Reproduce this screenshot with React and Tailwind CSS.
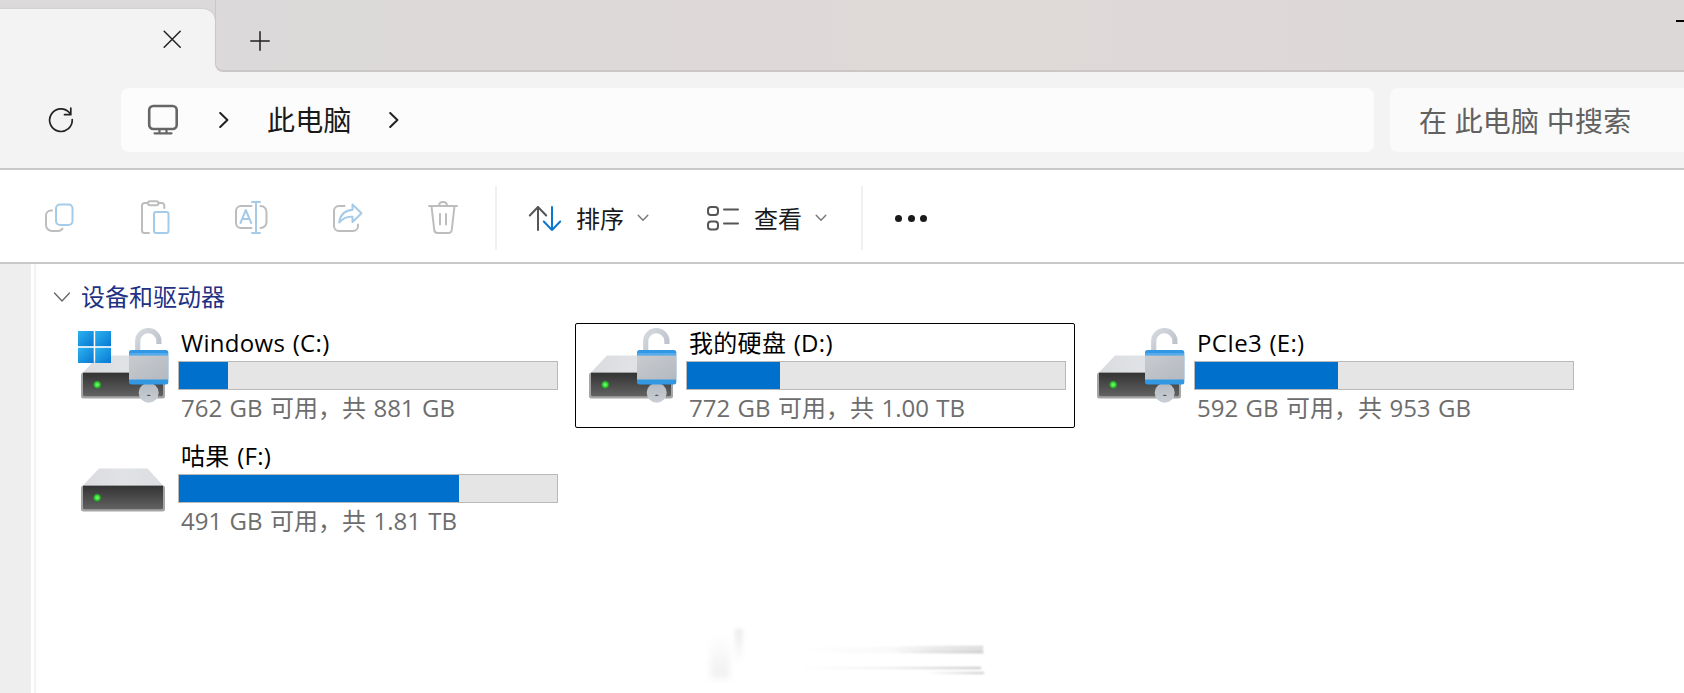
import React from 'react';

const drives = [
  { name: 'Windows (C:)', info: '762 GB 可用，共 881 GB', fill: 49, locked: true, system: true },
  { name: '我的硬盘 (D:)', info: '772 GB 可用，共 1.00 TB', fill: 93, locked: true, selected: true },
  { name: 'PCIe3 (E:)', info: '592 GB 可用，共 953 GB', fill: 143, locked: true },
  { name: '咕果 (F:)', info: '491 GB 可用，共 1.81 TB', fill: 280 },
];

function Icon({ w, h, box, className = '', children }) {
  return (
    <svg width={w} height={h} viewBox={box} fill="none" strokeWidth="2" strokeLinecap="round" strokeLinejoin="round" className={`block shrink-0 ${className}`}>
      {children}
    </svg>
  );
}

function Gradients() {
  return (
    <svg width="0" height="0" className="absolute">
      <defs>
        <linearGradient id="face" x1="0" y1="0" x2="0" y2="1">
          <stop offset="0" stopColor="#333333" />
          <stop offset="1" stopColor="#626262" />
        </linearGradient>
        <linearGradient id="lid" x1="0" y1="0" x2="1" y2="0">
          <stop offset="0" stopColor="#d9dbde" />
          <stop offset="0.5" stopColor="#e1e2e5" />
          <stop offset="1" stopColor="#dcdde1" />
        </linearGradient>
        <linearGradient id="lockBody" x1="0" y1="0" x2="1" y2="1">
          <stop offset="0" stopColor="#c8cbcf" />
          <stop offset="1" stopColor="#b4b9c0" />
        </linearGradient>
        <linearGradient id="shackle" x1="0" y1="0" x2="1" y2="1">
          <stop offset="0" stopColor="#d5d9df" />
          <stop offset="1" stopColor="#b9bec7" />
        </linearGradient>
        <linearGradient id="win" x1="0" y1="0" x2="1" y2="1">
          <stop offset="0" stopColor="#2cb2ee" />
          <stop offset="1" stopColor="#0878d4" />
        </linearGradient>
        <radialGradient id="led">
          <stop offset="0" stopColor="#7dff6d" />
          <stop offset="0.55" stopColor="#35d936" />
          <stop offset="1" stopColor="#1c8a24" stopOpacity="0.5" />
        </radialGradient>
        <linearGradient id="knob" x1="0" y1="0" x2="0" y2="1">
          <stop offset="0" stopColor="#b3b8bf" />
          <stop offset="1" stopColor="#cbd0d6" />
        </linearGradient>
      </defs>
    </svg>
  );
}

function DriveIcon({ locked, system }) {
  return (
    <svg width="103" height="105" viewBox="75 323 103 105" className="block shrink-0">
      <path d="M99 355.500h48.500l16.500 18H82z" fill="url(#lid)" />
      <rect x="81" y="372.500" width="84" height="26" rx="2.500" fill="#a5a5a6" />
      <path d="M83 372.700h80v22q0 1.500-1.500 1.500h-77q-1.500 0-1.500-1.500z" fill="url(#face)" />
      <circle cx="97.200" cy="384.700" r="4.200" fill="url(#led)" />
      {system && (
        <g fill="url(#win)">
          <path d="M78 331h15.700v15.200H78z" />
          <path d="M95.200 331H111v15.200H95.200z" />
          <path d="M78 347.800h15.700v15.200H78z" />
          <path d="M95.200 347.800H111v15.200H95.200z" />
        </g>
      )}
      {locked && (
        <g>
          <path d="M137.700 351v-9a10.600 10.600 0 0 1 21.200 -1.500v3.500" fill="none" stroke="url(#shackle)" strokeWidth="5.200" />
          <circle cx="148.700" cy="392.700" r="10" fill="url(#knob)" />
          <path d="M146.500 396q2.200-3 4.500 0z" fill="#555b63" />
          <rect x="129" y="350" width="39.300" height="34.500" rx="2.500" fill="#3298e4" />
          <rect x="129.500" y="353" width="38.300" height="2.500" fill="#55acec" />
          <rect x="129" y="355.500" width="39.300" height="24" fill="url(#lockBody)" />
        </g>
      )}
    </svg>
  );
}

function Drive({ drive }) {
  return (
    <div className={`flex h-[105px] w-[500px] ${drive.selected ? 'rounded-[2px] outline outline-1 -outline-offset-1 outline-black' : ''}`}>
      <div className="ml-2">
        <DriveIcon locked={drive.locked} system={drive.system} />
      </div>
      <div className="w-[380px]">
        <div className="flex h-[38px] items-center pt-px pl-[3px] tracking-[0.3px] text-black [word-spacing:1px]">{drive.name}</div>
        <div className="h-[29px] border border-[#b9b9b9] bg-[#e5e5e5]">
          <div className="h-[27px] bg-[#0070cd]" style={{ width: drive.fill }} />
        </div>
        <div className="flex h-[36px] items-center pl-[3px] whitespace-nowrap text-[#6d6d6d] [word-spacing:1.2px]">{drive.info}</div>
      </div>
    </div>
  );
}

function TabStrip() {
  return (
    <div className="flex h-[72px] bg-[#dbd9d9]">
      <div className="flex w-[215px] flex-col bg-[#dbd9d9]">
        <div className="mt-[9px] flex-1 rounded-tr-[12px] bg-[#f3f3f3] shadow-[0_0_2px_#bbb]">
          <Icon w={18} h={18} box="0 0 18 18" className="mt-[21px] ml-[163px]">
            <path d="M1.200 1.200l16 16M17.200 1.200l-16 16" stroke="#222" strokeWidth="1.500" />
          </Icon>
        </div>
      </div>
      <div className="flex-1 bg-[#f3f3f3]">
        <div className="flex h-[72px] justify-between rounded-bl-[8px] border-b-2 border-l border-[#cbc7c7] bg-linear-to-r from-[#dbd9d9] via-[#dfd9d8] to-[#dcd8d8]">
          <Icon w={20} h={20} box="0 0 20 20" className="mt-[31px] ml-[34px]">
            <path d="M10 .8v18.400M.8 10h18.400" stroke="#222" strokeWidth="1.500" />
          </Icon>
          <div className="mt-5 h-[2px] w-2 bg-black" />
        </div>
      </div>
    </div>
  );
}

function Crumb({ className }) {
  return (
    <Icon w={10} h={16} box="0 0 10 16" className={className}>
      <path d="M1.200 1l7.200 7-7.200 7" stroke="#222" strokeWidth="2" />
    </Icon>
  );
}

function AddressBar() {
  return (
    <div className="flex h-[98px] border-b-2 border-[#c9c7c7] bg-[#f3f3f3] pt-4 text-[28px]">
      <Icon w={26} h={26} box="0 0 26 26" className="mt-[19px] ml-12">
        <path d="M24.200 12.500A11.300 11.300 0 1 1 21.500 5.800M22.800 1v6.700h-6.300" stroke="#222" strokeWidth="1.700" />
      </Icon>
      <div className="ml-[47px] flex h-16 w-[1253px] items-center rounded-lg bg-[#fcfcfc] text-[#1a1a1a]">
        <Icon w={32} h={31} box="0 0 32 31" className="ml-[26px] -translate-y-px">
          <rect x="2.200" y="2" width="27.500" height="23" rx="4" stroke="#666" strokeWidth="2.600" />
          <path d="M12.500 25v4M19.500 25v4M7.500 29.300h17" stroke="#666" strokeWidth="2.200" />
        </Icon>
        <Crumb className="ml-[40px]" />
        <span className="ml-[38px] tracking-[0.2px]">此电脑</span>
        <Crumb className="ml-[37px]" />
      </div>
      <div className="ml-4 flex h-16 flex-1 items-center rounded-l-lg bg-[#fbfafa] pt-px pl-[29px] tracking-[0.2px] whitespace-nowrap text-[#616161]">在 此电脑 中搜索</div>
    </div>
  );
}

function Chevron({ className }) {
  return (
    <Icon w={12} h={8} box="0 0 12 8" className={className}>
      <path d="M1.200 1.200l4.800 5 4.800-5" stroke="#777" strokeWidth="1.400" />
    </Icon>
  );
}

function Toolbar() {
  return (
    <div className="flex h-[94px] items-center border-b-2 border-[#c9c7c7] bg-white pt-1 text-[#1a1a1a]">
      <Icon w={32} h={32} box="0 0 32 32" className="ml-[43px]">
        <path d="M9 8.500H8a5 5 0 0 0-5 5V23a6 6 0 0 0 6 6h6q3 0 4.500-2.500" stroke="#bdbdbd" />
        <rect x="13" y="2.500" width="16.500" height="20.500" rx="4" stroke="#a5cbe9" />
      </Icon>
      <Icon w={32} h={34} box="0 0 32 34" className="ml-[65px] -translate-y-px">
        <path d="M8 3H4.500A2.500 2.500 0 0 0 2 5.500v25A2.500 2.500 0 0 0 4.500 33H9M18.500 3h3.300a2.500 2.500 0 0 1 2.500 2.500V8" stroke="#bdbdbd" />
        <rect x="8" y="1.300" width="10.500" height="4" rx="2" stroke="#bdbdbd" />
        <rect x="14" y="12" width="14.500" height="21" rx="2" stroke="#a5cbe9" />
      </Icon>
      <Icon w={34} h={34} box="0 0 34 34" className="ml-[62px] -translate-y-px">
        <path d="M17.500 6H7a5 5 0 0 0-5 5v12a5 5 0 0 0 5 5h10.500M26.500 6a6 6 0 0 1 6 6v10a6 6 0 0 1-6 6" stroke="#bdbdbd" />
        <path d="M6.500 23l5.300-13 5.400 13M8.300 19h7M22 2v31M18 2h8M18 33h8" stroke="#a5cbe9" />
      </Icon>
      <Icon w={32} h={32} box="0 0 32 32" className="ml-[64px]">
        <path d="M12.500 4H7a5 5 0 0 0-5 5v15a5 5 0 0 0 5 5h14a5 5 0 0 0 5-5v-1.500" stroke="#bdbdbd" />
        <path d="M20.500 2.500l9 8.700-9 8.800v-5.200q-7.500-.8-13.300 5.700Q8.500 8.800 20.500 7.700z" stroke="#a5cbe9" />
      </Icon>
      <Icon w={32} h={34} box="0 0 32 34" className="ml-[63px] -translate-y-px">
        <path d="M2 6h28M12 6q0-4 4-4t4 4M4.500 6l2.700 23.500A3.500 3.500 0 0 0 10.500 33h10.800a3.500 3.500 0 0 0 3.500-3.500L27.500 6M13 14v10.500M19 14v10.500" stroke="#bdbdbd" />
      </Icon>
      <div className="ml-[36px] h-16 w-[2px] bg-[#f0f0f0]" />
      <Icon w={34} h={26} box="0 0 34 26" className="ml-[31px]">
        <path d="M10 25V2M1.800 10.500L10 2l8.200 8.500" stroke="#555" />
        <path d="M24 2v23M15.800 16.500L24 25l8.200-8.500" stroke="#0c78cd" />
      </Icon>
      <span className="ml-[14px] pt-px">排序</span>
      <Chevron className="ml-[13px]" />
      <Icon w={34} h={26} box="0 0 34 26" className="ml-[57px]">
        <rect x="2" y="2" width="10" height="8" rx="3" stroke="#555" />
        <rect x="2" y="16.500" width="10" height="8" rx="3" stroke="#555" />
        <path d="M18 4.500H32M18 18.500H32" stroke="#555" />
      </Icon>
      <span className="ml-[14px] pt-px">查看</span>
      <Chevron className="ml-[13px]" />
      <div className="ml-[34px] h-16 w-[2px] bg-[#f0f0f0]" />
      <div className="ml-[32px] flex gap-[5.6px]">
        <div className="h-[7px] w-[7px] rounded-full bg-[#1a1a1a]" />
        <div className="h-[7px] w-[7px] rounded-full bg-[#1a1a1a]" />
        <div className="h-[7px] w-[7px] rounded-full bg-[#1a1a1a]" />
      </div>
    </div>
  );
}

function Smudge() {
  return (
    <div className="absolute top-[626px] left-[706px] h-[54px] w-[280px]">
      <div className="absolute top-[8px] left-[4px] h-[44px] w-[20px] bg-linear-to-b from-transparent to-[#f0f0f0] blur-[3px]" />
      <div className="absolute top-[3px] left-[29px] h-[34px] w-[8px] bg-linear-to-b from-[#ebebeb] to-transparent blur-[2px]" />
      <div className="absolute top-[21px] left-[90px] h-[6px] w-[187px] bg-linear-to-r from-transparent via-[#f9f9f9] to-[#e0e0e0] blur-[1px]" />
      <div className="absolute top-[20px] left-[190px] h-[2px] w-[87px] bg-linear-to-r from-transparent to-[#d8d8d8] blur-[1px]" />
      <div className="absolute top-[25px] left-[190px] h-[2px] w-[87px] bg-linear-to-r from-transparent to-[#cccccc] blur-[1px]" />
      <div className="absolute top-[41px] left-[90px] h-[2px] w-[185px] bg-linear-to-r from-transparent via-[#efefef] to-[#c4c4c4] blur-[1px]" />
      <div className="absolute top-[46px] left-[220px] h-[2px] w-[58px] bg-linear-to-r from-transparent to-[#c8c8c8] blur-[1px]" />
    </div>
  );
}

export default function App() {
  return (
    <div className="relative flex h-[693px] w-[1684px] flex-col overflow-hidden bg-white font-['Open_Sans','Noto_Sans_CJK_SC',sans-serif] text-[24px] leading-none">
      <Gradients />
      <TabStrip />
      <AddressBar />
      <Toolbar />
      <div className="flex flex-1">
        <div className="w-[31px] bg-[#eeeeee]" />
        <div className="ml-[3px] w-[2px] bg-[#f3f3f3]" />
        <div className="flex-1">
          <div className="flex h-[59px] items-center pt-[6px] pl-[17px] text-[#1f3284]">
            <Icon w={18} h={12} box="0 0 18 12">
              <path d="M1.500 2l7.500 8 7.500-8" stroke="#666" strokeWidth="1.300" />
            </Icon>
            <span className="ml-[10px]">设备和驱动器</span>
          </div>
          <div className="ml-[31px] flex w-[1540px] flex-wrap gap-2">
            {drives.map((d) => (
              <Drive key={d.name} drive={d} />
            ))}
          </div>
        </div>
      </div>
      <Smudge />
    </div>
  );
}
